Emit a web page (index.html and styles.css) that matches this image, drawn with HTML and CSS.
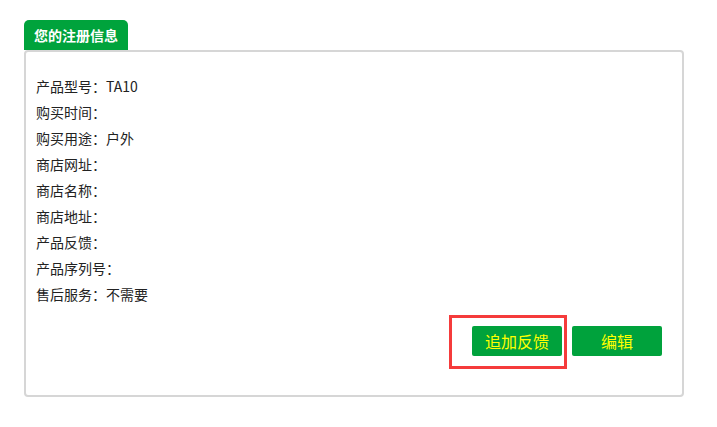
FILE: index.html
```html
<!DOCTYPE html>
<html lang="zh-CN">
<head>
  <meta charset="UTF-8">
  <meta name="viewport" content="width=device-width, initial-scale=1.0">
  <title>您的注册信息</title>
  <link rel="stylesheet" href="styles.css">
</head>
<body>
  <div class="panel">
    <div class="tab">您的注册信息</div>
    <div class="box">
      <p class="row">产品型号：TA10</p>
      <p class="row">购买时间：</p>
      <p class="row">购买用途：户外</p>
      <p class="row">商店网址：</p>
      <p class="row">商店名称：</p>
      <p class="row">商店地址：</p>
      <p class="row">产品反馈：</p>
      <p class="row">产品序列号：</p>
      <p class="row">售后服务：不需要</p>

      <div class="actions">
        <button class="btn">追加反馈</button>
        <button class="btn">编辑</button>
        <span class="mark"></span>
      </div>
    </div>
  </div>
</body>
</html>
```

FILE: styles.css
```css
body {
  margin: 0;
  padding: 20px 0 0 24px;
  font-family: "Noto Sans CJK SC", "Liberation Sans", sans-serif;
  color: #222;
  background: #fff;
}
.panel {
  width: 660px;
}
.tab {
  display: inline-block;
  height: 30px;
  line-height: 30px;
  padding: 0 10px;
  background-color: #00a33c;
  color: #fff;
  font-size: 14px;
  font-weight: bold;
  border-radius: 5px 5px 0 0;
}
.box {
  border: 2px solid #d6d6d6;
  border-radius: 4px;
  padding: 21px 20px 39px 10px;
}
.row {
  margin: 0;
  font-size: 14px;
  line-height: 26px;
}
.actions {
  position: relative;
  display: flex;
  justify-content: flex-end;
  gap: 10px;
  margin-top: 19px;
}
.btn {
  width: 90px;
  height: 30px;
  padding: 0;
  background-color: #00a23c;
  color: #ffff00;
  font-family: "Noto Sans CJK SC", "Liberation Sans", sans-serif;
  font-size: 16px;
  border: none;
  border-radius: 2px;
}
.mark {
  position: absolute;
  left: 413px;
  top: -11px;
  width: 112px;
  height: 48px;
  border: 3px solid #f53b3b;
}
```
